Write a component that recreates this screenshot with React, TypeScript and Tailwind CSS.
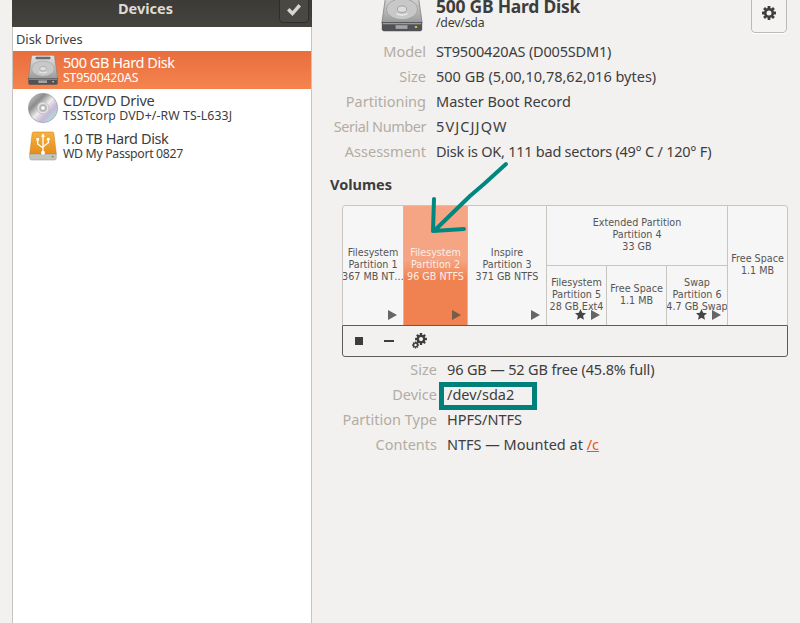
import React from "react";

function DiskIcon({ size, id }: { size: number; id: string }) {
  return (
    <svg width={size} height={size} viewBox="0 0 48 48" className="shrink-0">
      <defs>
        <linearGradient id={id} x1="0" y1="0" x2="0" y2="1">
          <stop offset="0" stopColor="#e4e4e4" />
          <stop offset="0.55" stopColor="#bcbcbc" />
          <stop offset="1" stopColor="#9a9a9a" />
        </linearGradient>
      </defs>
      <path d="M9 2h30q2 0 2.300 2L46 37H2L6.700 4Q7 2 9 2z" fill={`url(#${id})`} stroke="#7a7a7a" strokeWidth="0.8" />
      <rect x="13" y="4" width="22" height="4" rx="1" fill="#6a6a6a" />
      <ellipse cx="24" cy="22" rx="17" ry="11.500" fill="#c8c8c8" stroke="#9a9a9a" strokeWidth="0.8" />
      <ellipse cx="24" cy="22" rx="5" ry="3.500" fill="#dedede" stroke="#929292" strokeWidth="0.8" />
      <path d="M18 27q6 3 12 0" fill="none" stroke="#f4f4f4" strokeWidth="1.200" />
      <path d="M2 36h44v8q0 2-2 2H4q-2 0-2-2z" fill="#505255" />
      <rect x="3" y="37" width="42" height="1.500" fill="#9a9c9f" />
      <rect x="17" y="39.500" width="13" height="4" fill="#a4a4a4" />
      <rect x="38" y="40.500" width="2.500" height="2" fill="#e8c13a" />
    </svg>
  );
}

function CdIcon() {
  return (
    <svg width="32" height="32" viewBox="0 0 48 48" className="shrink-0">
      <defs>
        <linearGradient id="cdg" x1="0" y1="0" x2="1" y2="1">
          <stop offset="0" stopColor="#d8d8d8" />
          <stop offset="0.3" stopColor="#8c8c8c" />
          <stop offset="0.5" stopColor="#ececec" />
          <stop offset="0.68" stopColor="#c9b7d6" />
          <stop offset="0.8" stopColor="#b4d3d8" />
          <stop offset="1" stopColor="#d4d4d4" />
        </linearGradient>
      </defs>
      <circle cx="24" cy="24" r="22" fill="url(#cdg)" stroke="#9a9a9a" strokeWidth="1" />
      <circle cx="24" cy="24" r="9" fill="#e3e3e3" stroke="#b5b5b5" strokeWidth="1" />
      <circle cx="24" cy="24" r="6" fill="#bdbdbd" />
      <circle cx="24" cy="24" r="3.500" fill="#ffffff" stroke="#8a8a8a" strokeWidth="0.8" />
    </svg>
  );
}

function UsbIcon() {
  return (
    <svg width="32" height="32" viewBox="0 0 48 48" className="shrink-0">
      <defs>
        <linearGradient id="usbg" x1="0" y1="0" x2="0" y2="1">
          <stop offset="0" stopColor="#f6b23f" />
          <stop offset="1" stopColor="#e58d1c" />
        </linearGradient>
      </defs>
      <path d="M10 3h28q2 0 2.200 2L44 36H4L7.800 5Q8 3 10 3z" fill="url(#usbg)" stroke="#c98320" strokeWidth="0.8" />
      <path d="M4 36h40v6q0 3-3 3H7q-3 0-3-3z" fill="#c4c4bd" stroke="#9c9c95" strokeWidth="0.8" />
      <rect x="37" y="39" width="3" height="2" fill="#7d8a5a" />
      <g fill="none" stroke="#ffffff" strokeWidth="2">
        <path d="M24 9v24" />
        <path d="M16 15v6l8 6" />
        <path d="M32 15v4l-8 6" />
      </g>
      <path d="M24 5l3 5h-6z" fill="#fff" />
      <rect x="14" y="12" width="4" height="4" fill="#fff" />
      <circle cx="32" cy="14" r="2.200" fill="#fff" />
      <circle cx="24" cy="34" r="3" fill="#fff" />
    </svg>
  );
}

function GearShape({ hole }: { hole: string }) {
  return (
    <>
      {[0, 45, 90, 135].map((a) => (
        <rect key={a} x="6.600" y="1" width="2.800" height="14" rx="0.400" fill="#3d3d3d" transform={`rotate(${a} 8 8)`} />
      ))}
      <circle cx="8" cy="8" r="5" fill="#3d3d3d" />
      <circle cx="8" cy="8" r="2.500" fill={hole} />
    </>
  );
}

function Tri({ light }: { light?: boolean }) {
  return (
    <svg width="9" height="10" viewBox="0 0 9 10" className="block">
      <path d="M0 0L9 5L0 10z" fill={light ? "#7a5a48" : "#666666"} />
    </svg>
  );
}

function Star() {
  return (
    <svg width="11" height="11" viewBox="0 0 20 20" className="block">
      <path d="M10 0l3 6.800 7 .7-5.300 4.700 1.600 7.300L10 15.800 3.700 19.500l1.600-7.300L0 7.500l7-.7z" fill="#444444" />
    </svg>
  );
}

function Row({
  label,
  children,
  labelW,
  labelClass = "",
  valueClass = "",
}: {
  label: string;
  children: React.ReactNode;
  labelW: string;
  labelClass?: string;
  valueClass?: string;
}) {
  return (
    <div className="flex h-[25px] items-center">
      <div className={`${labelW} whitespace-nowrap text-right text-[#b3aca3] ${labelClass}`}>{label}</div>
      <div className={`ml-[10px] whitespace-nowrap text-[#3d3d3d] ${valueClass}`}>{children}</div>
    </div>
  );
}

function Cell({
  lines,
  className = "",
  selected,
  star,
  arrow,
}: {
  lines: string[];
  className?: string;
  selected?: boolean;
  star?: boolean;
  arrow?: boolean;
}) {
  return (
    <div
      className={`relative flex items-center justify-center overflow-hidden text-center ${
        selected
          ? "border-x border-[#c4bdb6] bg-[linear-gradient(#f5a583_45%,#f08150_62%)] text-[#fbeee8]"
          : "bg-[#f6f6f6] text-[#555555]"
      } ${className}`}
    >
      <div className="whitespace-nowrap pb-[2px] text-[9.600px] leading-[12px]" style={{ fontFamily: '"DejaVu Sans", sans-serif' }}>
        {lines.map((l) => (
          <div key={l}>{l}</div>
        ))}
      </div>
      {(star || arrow) && (
        <div className="absolute bottom-[5px] right-[6px] flex items-center gap-[5px]">
          {star && <Star />}
          <Tri light={selected} />
        </div>
      )}
    </div>
  );
}

function SideItem({
  icon,
  title,
  sub,
  selected,
  titleClass = "",
  subClass = "",
}: {
  icon: React.ReactNode;
  title: string;
  sub: string;
  selected?: boolean;
  titleClass?: string;
  subClass?: string;
}) {
  return (
    <div
      className={`flex h-[38px] items-center pl-[14px] ${
        selected ? "bg-gradient-to-b from-[#e96e3d] to-[#f4844f] text-white" : "text-[#3d3d3d]"
      }`}
    >
      {icon}
      <div className="ml-[4px] flex flex-col pb-[2px]">
        <div className={`text-[14.500px] leading-[16px] ${titleClass}`}>{title}</div>
        <div className={`text-[12.300px] leading-[15px] ${subClass}`}>{sub}</div>
      </div>
    </div>
  );
}

export default function App() {
  return (
    <div
      className="relative flex h-[623px] w-[800px] overflow-hidden bg-[#f2f1f0] text-[14.500px] text-[#3d3d3d]"
      style={{ fontFamily: '"Noto Sans", "Open Sans", sans-serif' }}
    >
      {/* Sidebar */}
      <div className="ml-3 flex w-[300px] shrink-0 flex-col">
        <div className="relative flex h-[27px] shrink-0 justify-center bg-gradient-to-b from-[#3c3b37] to-[#45433e] pr-[33px] text-[14.500px] font-bold leading-[17px] text-[#dfdbd2]">
          Devices
          <div className="absolute right-[3px] top-[-3px] flex h-[26px] w-[30px] items-center justify-center rounded-b-[4px] border border-[#2f2e2a] bg-[#4a4843]">
            <svg width="16" height="14" viewBox="0 0 16 14">
              <path d="M1 7.500L3.500 5l3 3 6-7L15 3.500 6.500 13z" fill="#d9d6d0" />
            </svg>
          </div>
        </div>
        <div className="flex-1 border-x border-[#c8c4bf] bg-white">
          <div className="h-6 pl-[3px] text-[12.800px] leading-[24px] text-[#3d3d3d]">Disk Drives</div>
          <SideItem
            selected
            icon={<DiskIcon size={32} id="d1" />}
            title="500 GB Hard Disk"
            sub="ST9500420AS"
            titleClass="tracking-[-0.45px]"
            subClass="tracking-[-0.2px]"
          />
          <SideItem
            icon={<CdIcon />}
            title="CD/DVD Drive"
            sub="TSSTcorp DVD+/-RW TS-L633J"
            titleClass="tracking-[-0.25px]"
            subClass="tracking-[0.08px]"
          />
          <SideItem
            icon={<UsbIcon />}
            title="1.0 TB Hard Disk"
            sub="WD My Passport 0827"
            titleClass="tracking-[-0.4px]"
            subClass="tracking-[-0.33px]"
          />
        </div>
      </div>

      {/* Main */}
      <div className="flex min-w-0 flex-1 flex-col pl-[18px] pr-3">
        {/* Drive header */}
        <div className="flex h-[39px] items-start">
          <div className="-mt-[11px] ml-[50px]">
            <DiskIcon size={44} id="d2" />
          </div>
          <div className="-mt-[4px] ml-[12px] flex-1">
            <div className="text-[17.500px] font-bold leading-[20px] tracking-[-0.25px] text-[#3d3d3d]">500 GB Hard Disk</div>
            <div className="text-[12.300px] leading-[14px] tracking-[-0.2px]">/dev/sda</div>
          </div>
          <div className="-mt-[8px] mr-[1px] flex h-[41px] w-[36px] items-center justify-center rounded-[4px] border border-[#bdb9b4] bg-[#f4f3f2] shadow-[0_1px_0_#ffffff]">
            <svg width="16" height="16" viewBox="0 0 16 16">
              <GearShape hole="#f4f3f2" />
            </svg>
          </div>
        </div>

        <Row label="Model" labelW="w-[96px]" valueClass="tracking-[-0.18px]">ST9500420AS (D005SDM1)</Row>
        <Row label="Size" labelW="w-[96px]">500 GB (5,00,10,78,62,016 bytes)</Row>
        <Row label="Partitioning" labelW="w-[96px]">Master Boot Record</Row>
        <Row label="Serial Number" labelW="w-[96px]" labelClass="tracking-[-0.45px]" valueClass="tracking-[1.1px]">5VJCJJQW</Row>
        <Row label="Assessment" labelW="w-[96px]" valueClass="tracking-[-0.25px]">Disk is OK, 111 bad sectors (49° C / 120° F)</Row>

        <div className="mt-[10px] h-[31px] text-[14.500px] font-bold leading-[20px]">Volumes</div>

        {/* Volumes widget */}
        <div className="ml-[12px] flex h-[152px] w-[446px] flex-col">
          <div className="flex h-[120px] overflow-hidden rounded-t-[4px] border-x border-t border-[#c9c5c0]">
            <Cell className="w-[60px]" lines={["Filesystem", "Partition 1", "367 MB NT…"]} arrow />
            <Cell className="w-[65px]" selected lines={["Filesystem", "Partition 2", "96 GB NTFS"]} arrow />
            <Cell className="w-[79px] border-r border-[#c9c5c0]" lines={["Inspire", "Partition 3", "371 GB NTFS"]} arrow />
            <div className="flex w-[181px] flex-col border-r border-[#c9c5c0]">
              <Cell className="h-[60px] border-b border-[#c9c5c0]" lines={["Extended Partition", "Partition 4", "33 GB"]} />
              <div className="flex flex-1">
                <Cell className="w-[60px] border-r border-[#c9c5c0]" lines={["Filesystem", "Partition 5", "28 GB Ext4"]} star arrow />
                <Cell className="w-[60px] border-r border-[#c9c5c0]" lines={["Free Space", "1.1 MB"]} />
                <Cell className="flex-1" lines={["Swap", "Partition 6", "4.7 GB Swap"]} star arrow />
              </div>
            </div>
            <Cell className="flex-1" lines={["Free Space", "1.1 MB"]} />
          </div>
          <div className="flex h-[32px] items-center rounded-b-[3px] border border-[#5e5c58] bg-[#f2f1f0] pl-[12px]">
            <div className="h-[8px] w-[8px] bg-[#3d3d3d]" />
            <div className="ml-[21px] h-[2px] w-[10px] bg-[#3d3d3d]" />
            <svg width="16" height="16" viewBox="0 0 16 16" className="ml-[18px]">
              <g transform="translate(2.200 -0.800) scale(0.85)">
                <GearShape hole="#f2f1f0" />
              </g>
              <g transform="translate(-0.500 8) scale(0.5)">
                <GearShape hole="#f2f1f0" />
              </g>
            </svg>
          </div>
        </div>

        {/* Volume details */}
        <div>
          <Row label="Size" labelW="w-[107px]" valueClass="tracking-[-0.15px]">96 GB — 52 GB free (45.8% full)</Row>
          <Row label="Device" labelW="w-[107px]">/dev/sda2</Row>
          <Row label="Partition Type" labelW="w-[107px]">HPFS/NTFS</Row>
          <Row label="Contents" labelW="w-[107px]">
            NTFS — Mounted at <span className="text-[#e95420] underline">/c</span>
          </Row>
        </div>
      </div>

      {/* Annotations */}
      <svg className="absolute left-[425px] top-[160px]" width="90" height="75" viewBox="0 0 90 75">
        <path d="M81 4L59 24L45 36L9 71M9 39L8 71L39 69" fill="none" stroke="#00877f" strokeWidth="4" strokeLinecap="round" strokeLinejoin="round" />
      </svg>
      <div className="absolute left-[439px] top-[382px] h-[28px] w-[98px] border-[5px] border-[#00807a]" />
    </div>
  );
}
